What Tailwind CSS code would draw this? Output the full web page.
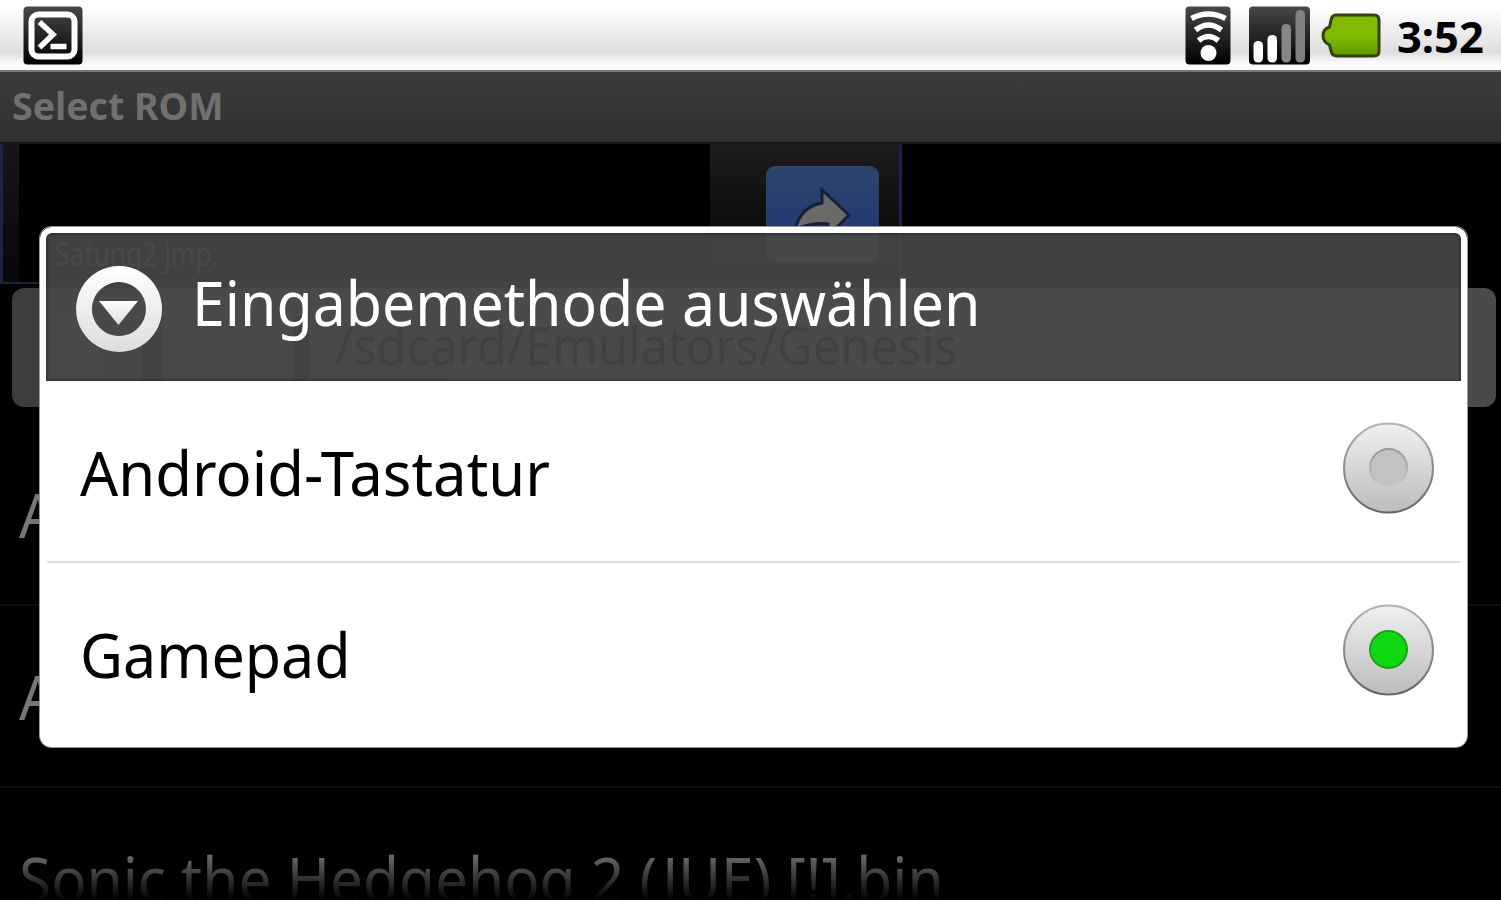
<!DOCTYPE html>
<html lang="de">
<head>
    <meta charset="UTF-8">
    <meta name="viewport" content="width=device-width, initial-scale=1.0">
    <title>Select ROM</title>
    <script src="https://cdn.jsdelivr.net/npm/@tailwindcss/browser@4"></script>
</head>
<body class="bg-black font-['Noto_Sans','Open_Sans',sans-serif]">
<div class="relative w-[1501px] h-[900px] overflow-hidden flex flex-col">

    <!-- Status bar -->
    <div class="h-[72px] shrink-0 flex items-center pt-0.5 pl-[23px] pr-4 bg-linear-to-b from-white from-10% via-[#dedede] via-75% to-[#fafafa] to-90% border-b-2 border-[#777]">
        <svg class="w-[60px] h-[60px]" viewBox="0 0 60 60">
            <defs>
                <linearGradient id="dark" x1="0" y1="0" x2="0" y2="1">
                    <stop offset="0" stop-color="#484848"/>
                    <stop offset="1" stop-color="#000"/>
                </linearGradient>
            </defs>
            <rect x="0.500" y="0.500" width="59" height="58" rx="4" fill="url(#dark)"/>
            <rect x="8.500" y="8.500" width="43" height="42" rx="7" fill="none" stroke="#fff" stroke-width="6"/>
            <path d="M16.500 16l13.500 12.500-13.500 13" fill="none" stroke="#fff" stroke-width="5.500"/>
            <path d="M27.500 40.500h16" stroke="#fff" stroke-width="5.500"/>
        </svg>
        <div class="ml-auto flex items-center">
            <svg class="w-[46px] h-[60px]" viewBox="0 0 46 60">
                <rect x="0.500" y="0.500" width="45" height="58" rx="4" fill="url(#dark)"/>
                <g fill="none" stroke="#fff" stroke-width="5.500">
                    <path d="M6.500 12.500q17-9 34 0"/>
                    <path d="M10.500 24q13-10 26 0"/>
                    <path d="M13.500 34.500q10-8 20 0"/>
                </g>
                <circle cx="23.500" cy="47" r="8" fill="#fff"/>
            </svg>
            <svg class="w-[62px] h-[60px] ml-[17px]" viewBox="0 0 62 60">
                <rect x="1" y="0.500" width="61" height="58" rx="4" fill="url(#dark)"/>
                <rect x="5.500" y="35" width="9.500" height="21.500" rx="4.500" fill="#fff"/>
                <rect x="19.500" y="29" width="9.500" height="27.500" rx="4.500" fill="#fff"/>
                <rect x="33.500" y="18" width="9.500" height="38.500" rx="4.500" fill="#868686"/>
                <rect x="47.500" y="4" width="9.500" height="52.500" rx="4.500" fill="#808080"/>
            </svg>
            <svg class="w-[60px] h-[46px] ml-[11px]" viewBox="0 0 60 46">
                <defs>
                    <linearGradient id="batt" x1="0" y1="0" x2="0" y2="1">
                        <stop offset="0" stop-color="#83b800"/>
                        <stop offset="0.500" stop-color="#7fbd00"/>
                        <stop offset="1" stop-color="#5f9800"/>
                    </linearGradient>
                </defs>
                <path d="M15 2H53Q58 2 58 7V38Q58 43 53 43H16Q11 43 10 38L8.500 32Q2 29 2 22.500Q2 16 8.500 14L10 7Q11 2 15 2z" fill="url(#batt)" stroke="#33420f" stroke-width="3"/>
            </svg>
            <div class="ml-4 w-[88px] text-[43px] leading-none font-bold whitespace-nowrap origin-left scale-x-[1.01]">3:52</div>
        </div>
    </div>

    <!-- Activity title -->
    <div class="h-[72px] shrink-0 flex items-center pl-3 pb-1 bg-linear-to-b from-[#3c3c3c] to-[#303030] border-b-2 border-[#15191b]">
        <h1 class="text-[38px] leading-none font-bold text-[#707070] origin-left scale-x-[0.987]">Select ROM</h1>
    </div>

    <!-- Path bar -->
    <div class="h-[140px] w-[902px] shrink-0 flex border-x-3 border-b-2 border-[#1b2346]">
        <div class="w-4 bg-linear-to-b from-[#171717] to-[#080808]"></div>
        <span class="self-end ml-9 mb-3 text-[32px] leading-none text-[#484848] origin-left scale-x-[0.82]">Satung2 jmp.</span>
        <div class="ml-auto w-[189px] pl-14 pt-[22px] bg-linear-to-b from-[#1c1c1c] to-[#050505]">
            <svg class="w-[114px] h-[96px]" viewBox="0 0 114 96">
                <defs>
                    <linearGradient id="blue" x1="0" y1="0" x2="0" y2="1">
                        <stop offset="0" stop-color="#2c4469"/>
                        <stop offset="0.600" stop-color="#243b72"/>
                        <stop offset="0.700" stop-color="#333a48"/>
                    </linearGradient>
                </defs>
                <rect width="113" height="96" rx="9" fill="url(#blue)"/>
                <path d="M29 64Q34 41 56 37V24L83 49 62 70V58Q44 56 29 64z" fill="#6a6a6a" stroke="#14203a" stroke-width="3"/>
            </svg>
        </div>
    </div>

    <!-- Current folder -->
    <div class="mt-1 ml-3 w-[1484px] h-[119px] shrink-0 flex items-end rounded-xl bg-linear-to-r from-[#3c3c3c] via-[#4f4f4f] to-[#4a4a4a] pb-[36px]">
        <div class="ml-9 w-[52px] h-[70px] -mb-[15px] bg-[#39435c]/60"></div>
        <div class="ml-[42px] w-5 h-[70px] -mb-[15px] bg-[#151515]"></div>
        <div class="ml-[132px] w-[15px] h-[70px] -mb-[15px] bg-[#151515]"></div>
        <span class="ml-[26px] text-[52px] leading-none text-black whitespace-nowrap origin-left scale-x-[0.94]">/sdcard/Emulators/Genesis</span>
    </div>

    <!-- File list -->
    <ul class="mt-[17px] text-[62px] leading-none text-[#777] whitespace-nowrap">
        <li class="h-[182px] pl-[19px] flex items-center border-b-2 border-[#0d0d0d]"><span class="origin-left scale-x-[0.944]">Alex Kidd.bin</span></li>
        <li class="h-[182px] pl-[19px] flex items-center border-b-2 border-[#0d0d0d]"><span class="origin-left scale-x-[0.944]">Altered Beast.bin</span></li>
        <li class="h-[182px] pl-[19px] pb-[3px] flex items-center"><span class="origin-left scale-x-[0.944]">Sonic the Hedgehog 2 (JUE) [!].bin</span></li>
    </ul>
    <div class="absolute inset-x-0 bottom-0 h-[50px] bg-linear-to-b from-transparent to-black"></div>

    <!-- Dialog -->
    <div class="absolute left-[39px] top-[226px] w-[1429px] h-[522px] rounded-xl overflow-hidden border border-[#999] flex flex-col">
        <div class="h-[154px] shrink-0 rounded-t-xl border-x-[6px] border-t-[6px] border-white flex items-center bg-[#4a4a4a]/88 pl-[30px] inset-shadow-[0_0_4px_#222]">
            <svg class="w-[88px] h-[88px] mt-1" viewBox="0 0 88 88">
                <defs>
                    <linearGradient id="ring" x1="0" y1="0" x2="0" y2="1">
                        <stop offset="0" stop-color="#fff"/>
                        <stop offset="1" stop-color="#dcdcdc"/>
                    </linearGradient>
                </defs>
                <path d="M43 1a43 43 0 1 0 .1 0zM43 17a27 27 0 1 1-.1 0z" fill="url(#ring)" fill-rule="evenodd"/>
                <path d="M23 36H62L42.500 60z" fill="url(#ring)"/>
            </svg>
            <h2 class="ml-[28px] mb-[11px] text-[62px] leading-none text-white whitespace-nowrap origin-left scale-x-[0.951]">Eingabemethode auswählen</h2>
        </div>
        <div class="grow bg-white px-[7px]">
            <div class="h-[182px] flex items-center justify-between pl-[33px] pr-[25px] border-b-2 border-[#dedede]">
                <span class="mt-[1px] text-[62px] leading-none text-black origin-left scale-x-[0.965]">Android-Tastatur</span>
                <svg class="w-[92px] h-[92px] mb-[6px]" viewBox="0 0 92 92">
                    <defs>
                        <linearGradient id="knob" x1="0" y1="0" x2="0" y2="1">
                            <stop offset="0" stop-color="#f0f0f0"/>
                            <stop offset="1" stop-color="#bcbcbc"/>
                        </linearGradient>
                        <linearGradient id="rim" x1="0" y1="0" x2="0" y2="1">
                            <stop offset="0" stop-color="#b5b5b5"/>
                            <stop offset="1" stop-color="#666"/>
                        </linearGradient>
                        <linearGradient id="dot" x1="0" y1="0" x2="0" y2="1">
                            <stop offset="0" stop-color="#999"/>
                            <stop offset="1" stop-color="#c8c8c8"/>
                        </linearGradient>
                    </defs>
                    <circle cx="45.500" cy="46" r="44.500" fill="url(#knob)" stroke="url(#rim)" stroke-width="2"/>
                    <circle cx="45.500" cy="45.500" r="18.500" fill="#c2c2c2" stroke="url(#dot)" stroke-width="2"/>
                </svg>
            </div>
            <div class="h-[180px] flex items-center justify-between pl-[33px] pr-[25px]">
                <span class="mt-[1px] text-[62px] leading-none text-black origin-left scale-x-[0.953]">Gamepad</span>
                <svg class="w-[92px] h-[92px] mb-[6px]" viewBox="0 0 92 92">
                    <circle cx="45.500" cy="46" r="44.500" fill="url(#knob)" stroke="url(#rim)" stroke-width="2"/>
                    <circle cx="45.500" cy="45.500" r="18.500" fill="#10d810" stroke="#1ba31b" stroke-width="2"/>
                </svg>
            </div>
        </div>
    </div>
</div>
</body>
</html>
